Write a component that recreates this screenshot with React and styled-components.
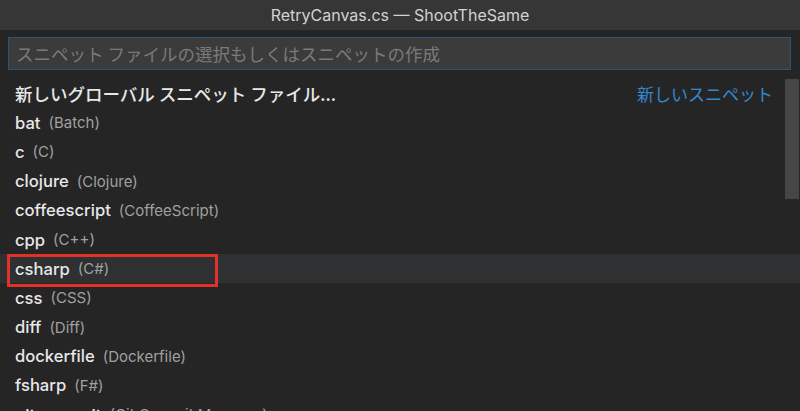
import React from "react";
import styled, { createGlobalStyle } from "styled-components";

const Global = createGlobalStyle`
  html, body { margin: 0; padding: 0; background: #252526; }
  body {
    width: 800px;
    height: 411px;
    overflow: hidden;
    font-family: Inter, "Noto Sans CJK JP", sans-serif;
    -webkit-font-smoothing: antialiased;
  }
`;

const Window = styled.div`
  width: 800px;
  height: 411px;
  display: flex;
  flex-direction: column;
  background: #252526;
  overflow: hidden;
`;

const TitleBar = styled.div`
  height: 30px;
  flex: none;
  background: #363636;
  color: #d2d2d2;
  font-size: 16px;
  display: flex;
  align-items: center;
  justify-content: center;
`;

const Picker = styled.div`
  flex: 1;
  display: flex;
  flex-direction: column;
  background: #252526;
  min-height: 0;
`;

const InputWrap = styled.div`
  padding: 7px 9px 9px 8px;
`;

const Input = styled.div`
  height: 31px;
  border: 1px solid #2c5677;
  background: #3b3b3c;
  color: #7a7a7a;
  font-size: 17.5px;
  display: flex;
  align-items: center;
  padding-left: 7px;
  font-family: "Noto Sans CJK JP", sans-serif;
`;

const ListArea = styled.div`
  flex: 1;
  position: relative;
  overflow: hidden;
`;

const List = styled.div`
  display: flex;
  flex-direction: column;
`;

const Row = styled.div`
  height: 29.2px;
  flex: none;
  display: flex;
  align-items: center;
  padding: 0 27px 0 15px;
  background: ${(p) => (p.$selected ? "#2e3032" : "transparent")};
  position: relative;
`;

const Name = styled.span`
  color: #e8e8e8;
  font-size: ${(p) => (p.$jp ? "17.5px" : "16.6px")};
  font-weight: 500;
  font-family: ${(p) => (p.$jp ? `"Noto Sans CJK JP", sans-serif` : `Inter, sans-serif`)};
`;

const Desc = styled.span`
  color: #a0a0a0;
  font-size: 15px;
  margin-left: 8px;
`;

const Action = styled.span`
  margin-left: auto;
  color: #3488cf;
  font-size: 17px;
  font-family: "Noto Sans CJK JP", sans-serif;
`;

const Highlight = styled.div`
  position: absolute;
  left: 7px;
  top: 0px;
  width: 205px;
  height: 27px;
  border: 3px solid #e0312a;
  pointer-events: none;
`;

const Scrollbar = styled.div`
  position: absolute;
  top: 0;
  right: 1px;
  width: 14px;
  height: 120px;
  background: #464646;
`;

const items = [
  ["bat", "Batch"],
  ["c", "C"],
  ["clojure", "Clojure"],
  ["coffeescript", "CoffeeScript"],
  ["cpp", "C++"],
  ["csharp", "C#"],
  ["css", "CSS"],
  ["diff", "Diff"],
  ["dockerfile", "Dockerfile"],
  ["fsharp", "F#"],
  ["git-commit", "Git Commit Message"],
];

export default function App() {
  return (
    <>
      <Global />
      <Window>
        <TitleBar>RetryCanvas.cs — ShootTheSame</TitleBar>
        <Picker>
          <InputWrap>
            <Input>スニペット ファイルの選択もしくはスニペットの作成</Input>
          </InputWrap>
          <ListArea>
            <List>
              <Row>
                <Name $jp>新しいグローバル スニペット ファイル...</Name>
                <Action>新しいスニペット</Action>
              </Row>
              {items.map(([name, desc]) => (
                <Row key={name} $selected={name === "csharp"}>
                  <Name>{name}</Name>
                  <Desc>({desc})</Desc>
                  {name === "csharp" && <Highlight />}
                </Row>
              ))}
            </List>
            <Scrollbar />
          </ListArea>
        </Picker>
      </Window>
    </>
  );
}
